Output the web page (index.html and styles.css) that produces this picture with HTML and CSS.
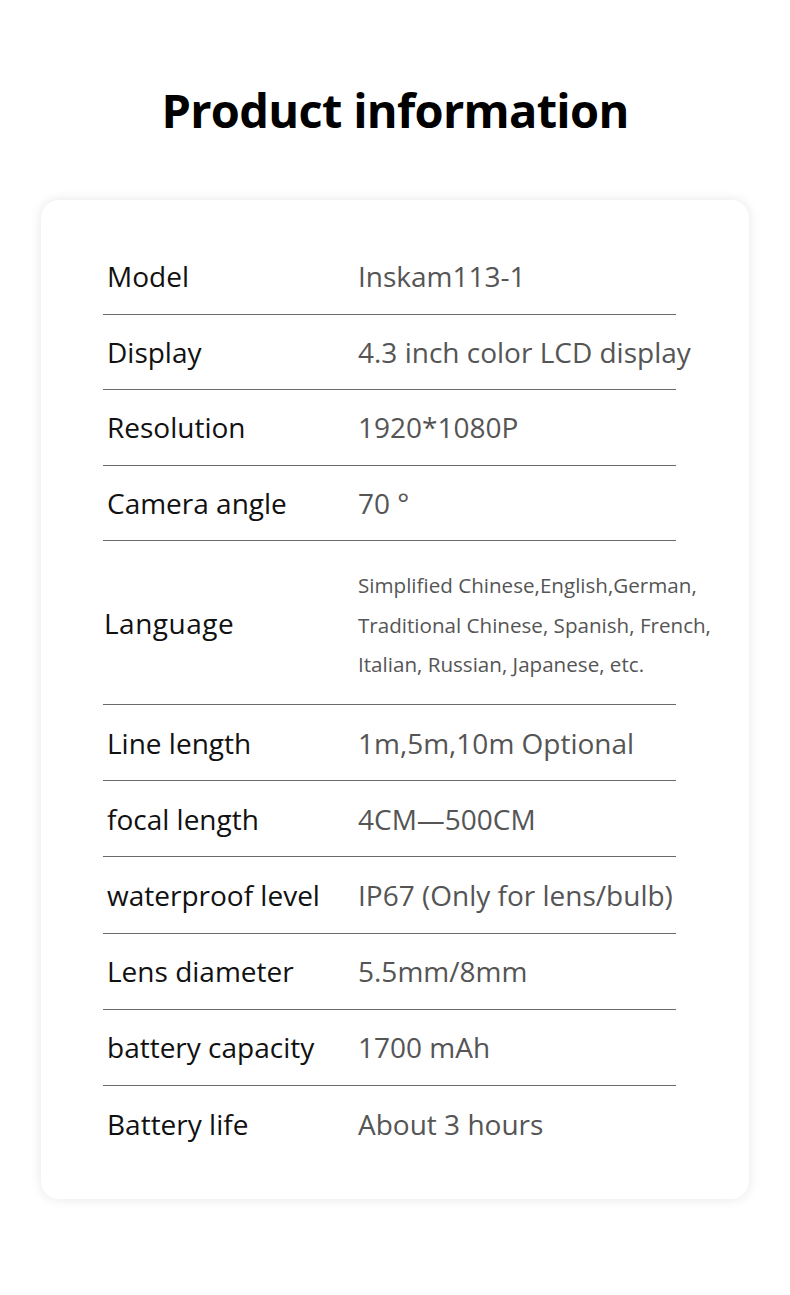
FILE: index.html
```html
<!DOCTYPE html>
<html>
<head>
<meta charset="utf-8">
<link rel="stylesheet" href="styles.css">
</head>
<body>
<h1 class="title">Product information</h1>
<div class="card">
  <div class="row row-a"><div class="label">Model</div><div class="value">Inskam113-1</div></div>
  <div class="row row-a"><div class="label">Display</div><div class="value">4.3 inch color LCD display</div></div>
  <div class="row row-a"><div class="label">Resolution</div><div class="value">1920*1080P</div></div>
  <div class="row row-a"><div class="label">Camera angle</div><div class="value">70 °</div></div>
  <div class="row row-tall"><div class="label label-lang">Language</div><div class="value value-small">
    <span>Simplified Chinese,English,German,</span>
    <span>Traditional Chinese, Spanish, French,</span>
    <span>Italian, Russian, Japanese, etc.</span>
  </div></div>
  <div class="row"><div class="label">Line length</div><div class="value">1m,5m,10m Optional</div></div>
  <div class="row"><div class="label">focal length</div><div class="value">4CM—500CM</div></div>
  <div class="row"><div class="label">waterproof level</div><div class="value">IP67 (Only for lens/bulb)</div></div>
  <div class="row"><div class="label">Lens diameter</div><div class="value">5.5mm/8mm</div></div>
  <div class="row"><div class="label">battery capacity</div><div class="value">1700 mAh</div></div>
  <div class="row last"><div class="label">Battery life</div><div class="value">About 3 hours</div></div>
</div>
</body>
</html>
```
FILE: styles.css
```css
* { box-sizing: border-box; }
html, body { margin: 0; padding: 0; background: #ffffff; }
body {
  width: 790px;
  height: 1295px;
  font-family: "Open Sans", "Noto Sans", sans-serif;
  overflow: hidden;
}
.title {
  margin: 0;
  padding-top: 77px;
  height: 200px;
  text-align: center;
  font-size: 47px;
  font-weight: 700;
  color: #000;
  line-height: 66px;
  letter-spacing: -0.7px;
}
.card {
  margin: 0 41px;
  width: 708px;
  height: 999px;
  background: #fff;
  border-radius: 18px;
  box-shadow: 0 0 12px rgba(0,0,0,0.10);
  padding: 39px 0 0 62px;
}
.row {
  width: 573px;
  height: 76.2px;
  display: flex;
  align-items: center;
  border-bottom: 1px solid #6a6a6a;
}
.row-a { height: 75.5px; }
.row.last { border-bottom: none; }
.row-tall { height: 164px; }
.label {
  flex-shrink: 0;
  width: 255px;
  padding-left: 4px;
  font-size: 28px;
  color: #111;
  white-space: nowrap;
}
.label-lang { padding-left: 1px; letter-spacing: 0.5px; }
.value {
  font-size: 28px;
  color: #555;
  white-space: nowrap;
}
.value-small {
  display: flex;
  flex-direction: column;
  padding-top: 6px;
  font-size: 20.6px;
  line-height: 39.5px;
  color: #555;
}
```
